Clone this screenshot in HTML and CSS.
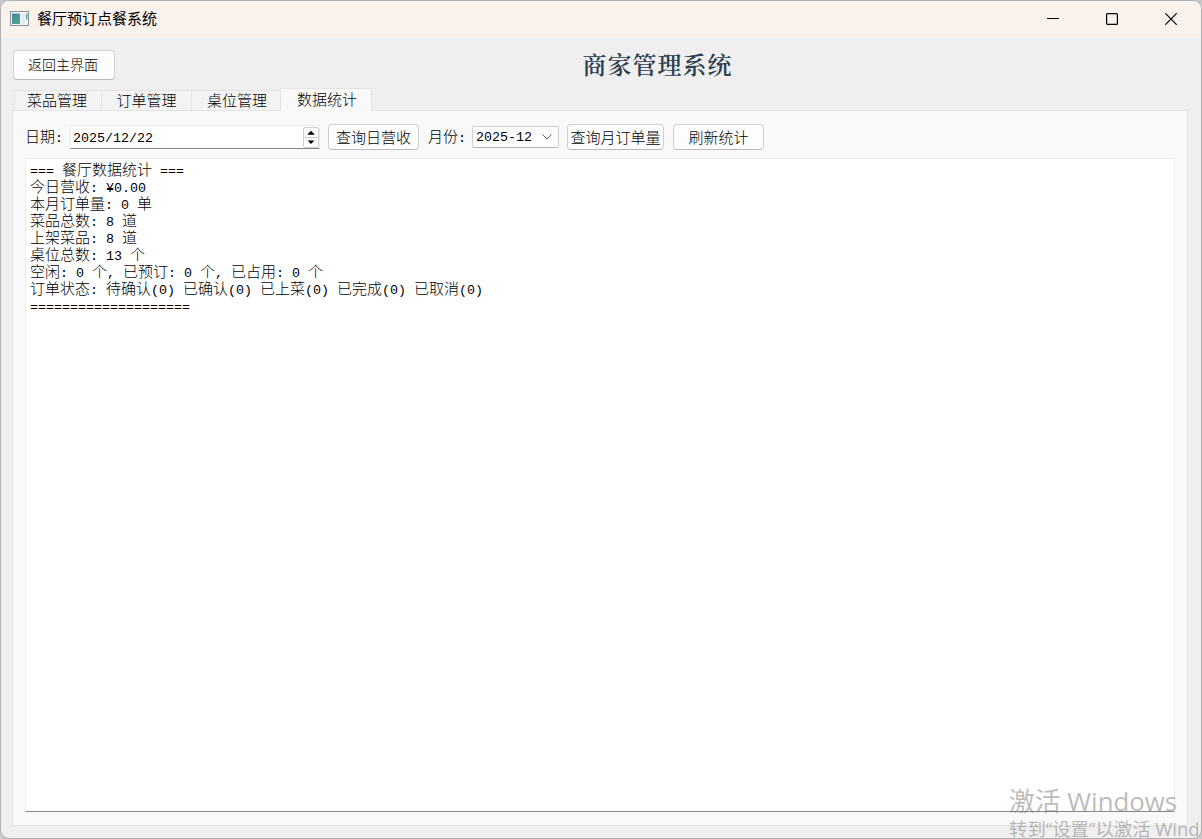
FILE: index.html
```html
<!DOCTYPE html>
<html lang="zh-CN">
<head>
  <meta charset="UTF-8" />
  <title>餐厅预订点餐系统</title>
  <link rel="stylesheet" href="styles.css">
</head>
<body>
  <div class="window">
    <div class="titlebar">
      <svg class="appIcon" width="19" height="15" viewBox="0 0 19 15">
        <defs>
          <linearGradient id="iconFill" x1="0" y1="0" x2="1" y2="1">
            <stop offset="0" stop-color="#4a7fa8" />
            <stop offset="1" stop-color="#4fae82" />
          </linearGradient>
        </defs>
        <rect x="0.5" y="0.5" width="18" height="14" fill="#f3f5f6" stroke="#8d9296" />
        <rect x="2" y="2.5" width="8" height="10.5" fill="url(#iconFill)" />
        <rect x="11" y="2.5" width="4" height="10.5" fill="#e6ebee" />
        <rect x="16" y="2.5" width="1.5" height="6" fill="#5fa79b" />
      </svg>
      <span class="caption">餐厅预订点餐系统</span>
      <div class="winButtons">
        <svg width="12" height="12" viewBox="0 0 12 12"><path d="M0 5.5H12" /></svg>
        <svg width="12" height="12" viewBox="0 0 12 12"><rect x="0.6" y="0.6" width="10.8" height="10.8" rx="1" /></svg>
        <svg width="12" height="12" viewBox="0 0 12 12"><path d="M0.3 0.3L11.7 11.7M11.7 0.3L0.3 11.7" /></svg>
      </div>
    </div>

    <div class="header">
      <button class="back">返回主界面</button>
      <h1>商家管理系统</h1>
    </div>

    <div class="tabs">
      <div class="tab first">菜品管理</div>
      <div class="tab">订单管理</div>
      <div class="tab last">桌位管理</div>
      <div class="tab active">数据统计</div>
    </div>

    <div class="pane">
      <div class="toolbar">
        <span class="label">日期<span class="n">:</span></span>
        <div class="dateEdit">
          <span class="n">2025/12/22</span>
          <div class="spin">
            <svg width="14" height="10" viewBox="0 0 14 10"><path d="M3 7L7 3L11 7Z" /></svg>
            <svg width="14" height="10" viewBox="0 0 14 10"><path d="M3 3L11 3L7 7Z" /></svg>
          </div>
        </div>
        <button class="day">查询日营收</button>
        <span class="label">月份<span class="n">:</span></span>
        <div class="combo">
          <span class="n">2025-12</span>
          <svg width="10" height="6" viewBox="0 0 10 6"><path d="M0.5 0.5L5 5L9.5 0.5" /></svg>
        </div>
        <button class="month">查询月订单量</button>
        <button class="refresh">刷新统计</button>
      </div>

      <div class="output">
        <div><span class="n">=== </span>餐厅数据统计<span class="n"> ===</span></div>
        <div>今日营收<span class="n">: ¥0.00</span></div>
        <div>本月订单量<span class="n">: 0 </span>单</div>
        <div>菜品总数<span class="n">: 8 </span>道</div>
        <div>上架菜品<span class="n">: 8 </span>道</div>
        <div>桌位总数<span class="n">: 13 </span>个</div>
        <div>空闲<span class="n">: 0 </span>个<span class="n">, </span>已预订<span class="n">: 0 </span>个<span class="n">, </span>已占用<span class="n">: 0 </span>个</div>
        <div>订单状态<span class="n">: </span>待确认<span class="n">(0) </span>已确认<span class="n">(0) </span>已上菜<span class="n">(0) </span>已完成<span class="n">(0) </span>已取消<span class="n">(0)</span></div>
        <div><span class="n">====================</span></div>
      </div>
    </div>
  </div>

  <div class="watermark">
    <div class="big">激活 Windows</div>
    <div class="small">转到“设置”以激活 Wind</div>
  </div>
</body>
</html>
```
FILE: styles.css
```css
* {
  box-sizing: border-box;
}
body {
  margin: 0;
  height: 839px;
  overflow: hidden;
  position: relative;
  background: #c9c9c9;
  color: #000;
  font-family: "Noto Sans CJK SC", sans-serif;
  font-size: 15px;
  font-weight: 300;
}
.window {
  height: 839px;
  display: flex;
  flex-direction: column;
  background: #efefef;
  border: 1px solid #b0b0b0;
  border-radius: 9px;
  overflow: hidden;
}
/* latin glyphs are half width, 8px each */
.n {
  font-family: "Liberation Mono", monospace;
  font-size: 13.33px;
  white-space: pre;
}
.titlebar {
  height: 37px;
  flex: none;
  display: flex;
  align-items: center;
  padding: 0 24px 2px 9px;
  background: #f9f1eb;
}
.caption {
  margin-left: 8px;
  font-weight: 400;
  line-height: 20px;
  padding-bottom: 2px;
}
.winButtons {
  margin-left: auto;
  display: flex;
  gap: 47px;
}
.winButtons svg {
  fill: none;
  stroke: #000;
  stroke-width: 1.2;
}
.header {
  height: 50px;
  flex: none;
  display: flex;
  align-items: flex-start;
  padding: 12px 12px 0;
}
button {
  height: 26px;
  padding: 0;
  border: 1px solid #d0d0d0;
  border-bottom-color: #bababa;
  border-radius: 4px;
  background: #fdfdfd;
  color: #000;
  font: inherit;
  line-height: 24px;
  white-space: nowrap;
}
.back {
  width: 102px;
  height: 30px;
  padding: 0 2px 2px 0;
  font-size: 14px;
  line-height: 26px;
}
h1 {
  flex: 1;
  margin: 0;
  padding-left: 11px;
  text-align: center;
  font-family: "Noto Serif CJK SC", "Noto Sans CJK SC", serif;
  font-size: 24px;
  font-weight: 600;
  letter-spacing: 1px;
  line-height: 28px;
  color: #2c3e50;
}
.tabs {
  height: 23px;
  flex: none;
  display: flex;
  align-items: flex-end;
  padding-left: 13px;
  position: relative;
  z-index: 1;
}
.tab {
  width: 90px;
  height: 21px;
  border: 1px solid #e3e3e3;
  border-left: none;
  background: #f3f3f3;
  line-height: 17px;
  text-align: center;
}
.tab.first {
  width: 88px;
  padding-right: 2px;
  border-left: 1px solid #e3e3e3;
}
.tab.last {
  width: 89px;
  padding-left: 2px;
}
.tab.active {
  width: 91px;
  height: 23px;
  padding-left: 2px;
  border-bottom: none;
  background: #f9f9f9;
  line-height: 19px;
}
.pane {
  flex: 1;
  margin: -1px 13px 12px 11px;
  padding: 13px 12px 13px;
  display: flex;
  flex-direction: column;
  border: 1px solid #e3e3e3;
  background: #f9f9f9;
}
.toolbar {
  height: 26px;
  flex: none;
  display: flex;
  align-items: center;
}
.label {
  width: 38px;
  margin-right: 6px;
  line-height: 24px;
  white-space: nowrap;
}
.dateEdit {
  width: 250px;
  height: 24px;
  margin: 0 8px 0 1px;
  padding: 2px 0 0 2px;
  display: flex;
  align-items: center;
  justify-content: space-between;
  background: #fff;
  border: 1px solid #ebebeb;
  border-bottom-color: #868686;
}
.spin {
  width: 16px;
  height: 21px;
  margin-top: -2px;
  display: flex;
  flex-direction: column;
  border: 1px solid #d0d0d0;
  border-radius: 2px;
  background: #fdfdfd;
}
.spin svg + svg {
  border-top: 1px solid #d0d0d0;
}
.day {
  width: 91px;
  margin-right: 9px;
}
.combo {
  width: 87px;
  height: 22px;
  margin-right: 8px;
  padding: 0 6px 0 3px;
  display: flex;
  align-items: center;
  justify-content: space-between;
  background: #fdfdfd;
  border: 1px solid #d0d0d0;
  border-bottom-color: #b5b5b5;
  border-radius: 2px;
}
.combo path {
  fill: none;
  stroke: #666;
}
.month {
  width: 97px;
  margin-right: 9px;
}
.refresh {
  width: 91px;
}
.output {
  flex: 1;
  margin-top: 8px;
  padding: 1px 4px;
  background: #fff;
  border: 1px solid #ebebeb;
  border-bottom-color: #868686;
}
.output div {
  height: 17px;
  line-height: 17px;
  white-space: nowrap;
}
/* activation notice lies over the window corner */
.watermark {
  position: absolute;
  left: 1009px;
  top: 785px;
  z-index: 2;
  color: rgba(120, 120, 120, 0.5);
  font-family: "Open Sans", "Noto Sans CJK SC", sans-serif;
  font-weight: 400;
  white-space: nowrap;
}
.big {
  font-size: 25.8px;
  line-height: 32px;
}
.small {
  font-size: 18.4px;
  line-height: 24px;
}
```
